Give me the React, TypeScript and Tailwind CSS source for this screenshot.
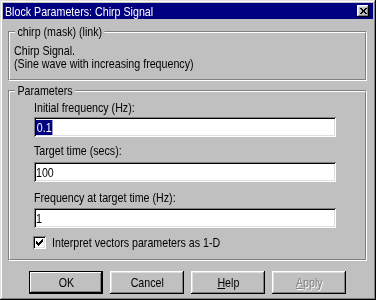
import clsx from "clsx";

const FONT = "font-['Liberation_Sans',Arial,sans-serif]";

/* Win9x bevels */
const RAISED =
  "shadow-[inset_-1px_-1px_0_#000,inset_1px_1px_0_#fff,inset_-2px_-2px_0_#808080,inset_2px_2px_0_#dfdfdf]";
const SUNKEN =
  "shadow-[inset_1px_1px_0_#808080,inset_-1px_-1px_0_#fff,inset_2px_2px_0_#000,inset_-2px_-2px_0_#dfdfdf]";

// MS Sans Serif in the shot is tall and narrow: squeeze Liberation Sans horizontally
function T({ className, children }: { className?: string; children: React.ReactNode }) {
  return (
    <span className={clsx("inline-block origin-left scale-x-[0.82] whitespace-nowrap", className)}>
      {children}
    </span>
  );
}

export default function App() {
  return (
    <div
      className={clsx(
        "flex h-[300px] w-[376px] flex-col bg-[#c0c0c0] p-[3px] text-[13px] leading-[13px] text-black",
        "shadow-[inset_-1px_-1px_0_#000,inset_1px_1px_0_#dfdfdf,inset_-2px_-2px_0_#808080,inset_2px_2px_0_#fff]",
        FONT,
      )}
    >
      {/* Title bar */}
      <div className="flex h-[16px] items-center justify-between bg-[#000080] pl-[2px] pr-[4px]">
        <T className="text-white">Block Parameters: Chirp Signal</T>
        <CloseButton />
      </div>

      {/* Mask description */}
      <GroupBox label="chirp (mask) (link)" className="ml-[5px] mr-[6px] mt-[12px] h-[50px]">
        <div className="flex flex-col pl-[4px] pt-[11px]">
          <T>Chirp Signal.</T>
          <T>(Sine wave with increasing frequency)</T>
        </div>
      </GroupBox>

      {/* Parameters */}
      <GroupBox label="Parameters" className="ml-[5px] mr-[6px] mt-[9px] h-[171px]">
        <div className="flex flex-col items-start pl-[24px]">
          <T className="mt-[9px]">Initial frequency (Hz):</T>
          <Field className="mt-[3px]">
            <T className="bg-[#000080] px-[1px] leading-[15px] text-white">0.1</T>
          </Field>
          <T className="mt-[7px]">Target time (secs):</T>
          <Field className="mt-[5px]">
            <T>100</T>
          </Field>
          <T className="mt-[9px]">Frequency at target time (Hz):</T>
          <Field className="mt-[4px]">
            <T>1</T>
          </Field>
          <div className="-ml-[1px] mt-[8px] flex items-center gap-[6px]">
            <span className={clsx("flex h-[13px] w-[13px] items-center justify-center bg-white", SUNKEN)}>
              <svg width="7" height="7" viewBox="0 0 7 7" shapeRendering="crispEdges">
                <path
                  d="M0 2h1v3h-1zM1 3h1v3h-1zM2 4h1v3h-1zM3 3h1v3h-1zM4 2h1v3h-1zM5 1h1v3h-1zM6 0h1v3h-1z"
                  fill="#000"
                />
              </svg>
            </span>
            <T>Interpret vectors parameters as 1-D</T>
          </div>
        </div>
      </GroupBox>

      {/* Buttons */}
      <div className="mt-[10px] flex gap-[7px] pl-[26px]">
        <Button isDefault>OK</Button>
        <Button>Cancel</Button>
        <Button>
          <span className="underline underline-offset-[1px]">H</span>elp
        </Button>
        <Button disabled>
          <span className="underline underline-offset-[1px]">A</span>pply
        </Button>
      </div>
    </div>
  );
}

/* ── Sub-components ─────────────────────────────────────────────────────── */

function GroupBox({
  label,
  className,
  children,
}: {
  label: string;
  className?: string;
  children: React.ReactNode;
}) {
  return (
    <div
      className={clsx(
        "relative border border-b-white border-l-[#808080] border-r-white border-t-[#808080]",
        className,
      )}
    >
      <div className="h-full border border-b-[#808080] border-l-white border-r-[#808080] border-t-white">
        {children}
      </div>
      <span className="absolute left-[6px] top-[-7px] origin-left scale-x-[0.82] whitespace-nowrap bg-[#c0c0c0] px-[3px]">
        {label}
      </span>
    </div>
  );
}

function Field({ className, children }: { className?: string; children: React.ReactNode }) {
  return (
    <div className={clsx("flex h-[20px] w-[302px] items-center bg-white pl-[2px]", SUNKEN, className)}>
      {children}
    </div>
  );
}

function Button({
  children,
  isDefault = false,
  disabled = false,
}: {
  children: React.ReactNode;
  isDefault?: boolean;
  disabled?: boolean;
}) {
  return (
    <div
      className={clsx(
        "flex h-[23px] w-[74px] items-center justify-center bg-[#c0c0c0]",
        isDefault
          ? "border border-black shadow-[inset_-1px_-1px_0_#000,inset_1px_1px_0_#fff,inset_-2px_-2px_0_#808080]"
          : RAISED,
        disabled && "text-[#808080] [text-shadow:1px_1px_0_#fff]",
      )}
    >
      <span className="inline-block origin-center scale-x-[0.82] whitespace-nowrap">{children}</span>
    </div>
  );
}

function CloseButton() {
  return (
    <div className={clsx("flex h-[12px] w-[12px] items-center justify-center bg-[#c0c0c0]", RAISED)}>
      <svg width="7" height="6" viewBox="0 0 7 6" shapeRendering="crispEdges">
        <path
          d="M0 0h2v1h-2zM5 0h2v1h-2zM1 1h2v1h-2zM4 1h2v1h-2zM2 2h3v2h-3zM1 4h2v1h-2zM4 4h2v1h-2zM0 5h2v1h-2zM5 5h2v1h-2z"
          fill="#000"
        />
      </svg>
    </div>
  );
}
